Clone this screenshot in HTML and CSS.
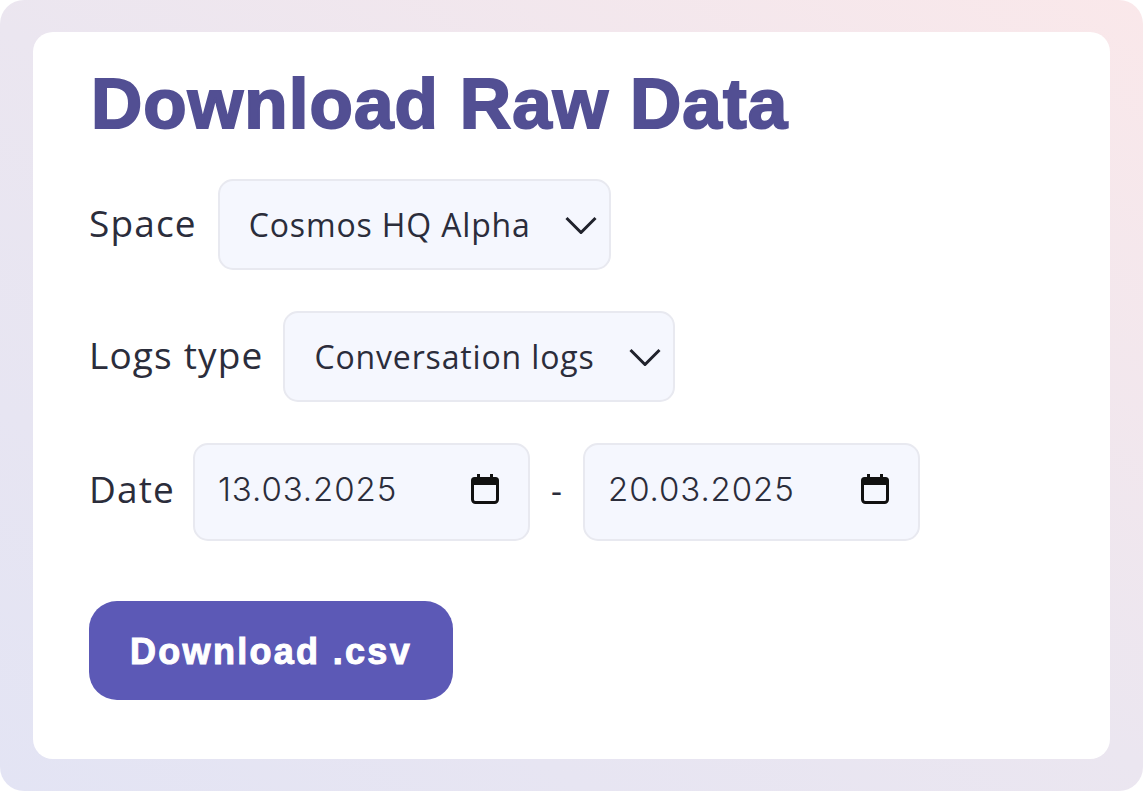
FILE: index.html
```html
<!DOCTYPE html>
<html lang="en">
<head>
<meta charset="utf-8">
<title>Download Raw Data</title>
<link rel="stylesheet" href="styles.css">
</head>
<body>
<main class="frame">
  <section class="card">
    <h1 class="title">Download Raw Data</h1>
    <div class="row row-space">
      <span class="label">Space</span>
      <div class="field select select-space">
        <span>Cosmos HQ Alpha</span>
        <svg class="chevron" viewBox="0 0 32 18"><path d="M1.5 2 16 16.5 30.500 2"/></svg>
      </div>
    </div>
    <div class="row row-logs">
      <span class="label">Logs type</span>
      <div class="field select select-logs">
        <span>Conversation logs</span>
        <svg class="chevron" viewBox="0 0 32 18"><path d="M1.5 2 16 16.500 30.500 2"/></svg>
      </div>
    </div>
    <div class="row row-date">
      <span class="label label-date">Date</span>
      <div class="field date">
        <span>13.03.2025</span>
        <svg class="calendar" viewBox="0 0 28 30"><path class="cal-fill" d="M6 0h3v3h10V0h3v3h2.500A3.500 3.500 0 0 1 28 6.500V11H0V6.500A3.500 3.500 0 0 1 3.500 3H6z"/><path class="cal-line" d="M1.500 9v16.500a3 3 0 0 0 3 3h19a3 3 0 0 0 3-3V9"/></svg>
      </div>
      <span class="dash">-</span>
      <div class="field date">
        <span>20.03.2025</span>
        <svg class="calendar" viewBox="0 0 28 30"><path class="cal-fill" d="M6 0h3v3h10V0h3v3h2.500A3.500 3.500 0 0 1 28 6.500V11H0V6.500A3.500 3.500 0 0 1 3.500 3H6z"/><path class="cal-line" d="M1.500 9v16.500a3 3 0 0 0 3 3h19a3 3 0 0 0 3-3V9"/></svg>
      </div>
    </div>
    <button class="download" type="button">Download .csv</button>
  </section>
</main>
</body>
</html>
```
FILE: styles.css
```css
* { box-sizing: border-box; }
html, body { margin: 0; padding: 0; background: #fff; }
body { width: 1143px; height: 791px; overflow: hidden; font-family: "Open Sans", sans-serif; }
.frame {
  width: 1143px; height: 791px; padding: 32px 33px;
  border-radius: 24px;
  background: linear-gradient(33deg, #e3e4f4 0%, #ebe6f0 50%, #fae8ea 100%);
}
.card {
  width: 1077px; height: 727px; background: #fff; border-radius: 20px;
  padding: 32px 56px 0;
  display: flex; flex-direction: column; align-items: flex-start;
}
.title {
  margin: 0 0 0 2px; height: 80px; font-family: "Liberation Sans", sans-serif; font-weight: 700; font-size: 71px; line-height: 80px;
  color: #524f93; -webkit-text-stroke: 2px #524f93; letter-spacing: 1.1px;
}
.row { display: flex; align-items: center; }
.row-space { margin-top: 35px; gap: 21px; }
.row-logs { margin-top: 41px; gap: 20px; }
.row-date { margin-top: 41px; gap: 20px; }
.label, .dash { font-size: 37px; color: #2b2d3b; letter-spacing: 1.15px; }
.label { margin-bottom: 4px; }
.label-date { margin: 0 -2px 8px 0; }
.dash { width: 13px; text-align: center; font-size: 34px; letter-spacing: 0; margin-bottom: 4px; }
.field {
  display: flex; align-items: center; justify-content: space-between; color: #2b2d3b;
  background: #f5f7fe; border: 2px solid #e8e9f0; border-radius: 15px;
}
.select { height: 91px; padding: 0 12px 0 29px; font-size: 32px; letter-spacing: 0.85px; }
.select-space { width: 393px; }
.select-logs { width: 392px; }
.date { width: 337px; height: 98px; padding: 0 29px 6px 23px; font-family: "Inter", sans-serif; font-weight: 350; font-size: 33px; letter-spacing: 0.9px; }
.chevron { width: 32px; height: 18px; fill: none; stroke: #20222c; stroke-width: 3; }
.calendar { width: 28px; height: 30px; }
.cal-fill { fill: #111; }
.cal-line { fill: none; stroke: #111; stroke-width: 3; }
.download {
  margin-top: 60px; width: 364px; height: 99px; padding: 3px 0 0; border: 0; border-radius: 28px;
  background: #5c59b6; color: #fff; font-family: "Liberation Sans", sans-serif; font-weight: 700; font-size: 36px; letter-spacing: 2.3px; -webkit-text-stroke: 1px #fff;
}
```
